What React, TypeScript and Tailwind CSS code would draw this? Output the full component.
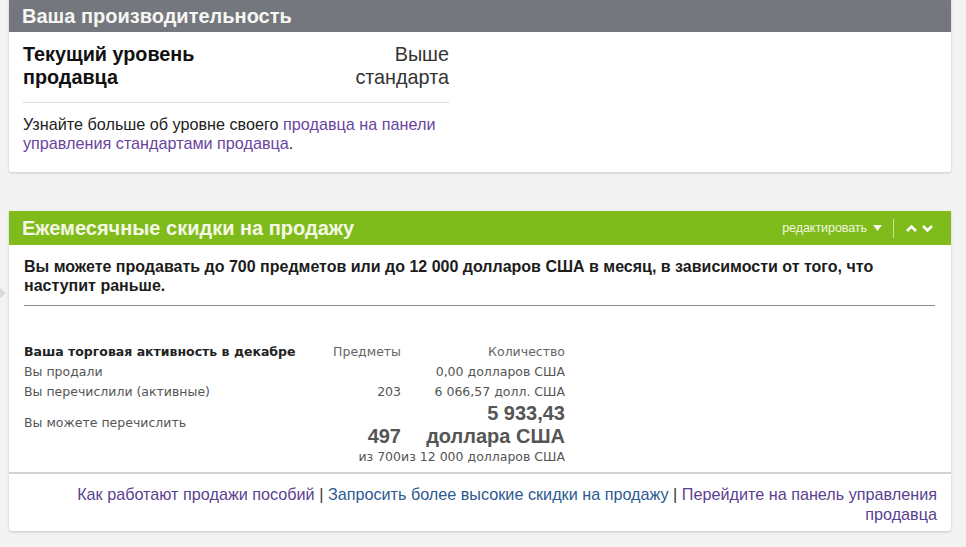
import React from 'react';

const arial = "font-['Liberation_Sans',Arial,sans-serif]";
const verdana = "font-['DejaVu_Sans',Verdana,sans-serif]";

function PerformanceCard() {
  return (
    <section className="ml-[9px] mr-[15px] rounded-b-[3px] bg-white shadow-[0_1px_3px_rgba(0,0,0,0.18)]">
      <header className="flex h-[32px] items-center bg-[#75777e] px-[13px]">
        <h2 className={`${arial} text-[20px] font-bold text-[#f6f6f2]`}>Ваша производительность</h2>
      </header>
      <div className="px-[14px] pb-[19px] pt-[11px]">
        <div className="w-[426px]">
          <div className="flex justify-between border-b border-[#dcdcdc] pb-[13px]">
            <div className={`${arial} text-[19.8px] font-bold leading-[23px] text-[#111]`}>
              Текущий уровень
              <br />
              продавца
            </div>
            <div className={`${arial} text-right text-[19.8px] leading-[23px] text-[#333]`}>
              Выше
              <br />
              стандарта
            </div>
          </div>
          <p className={`${arial} mt-[12px] text-[16.2px] leading-[19px] text-[#222]`}>
            Узнайте больше об уровне своего <a className="text-[#6a44a0]">продавца на панели</a>
            <br />
            <a className="text-[#6a44a0]">управления стандартами продавца</a>.
          </p>
        </div>
      </div>
    </section>
  );
}

function ActivityTable() {
  return (
    <div className={`${verdana} mt-[36px] grid w-[541px] grid-cols-[296px_81px_164px] text-[12.5px] text-[#555]`}>
      <div className="flex h-[20px] items-center font-bold text-[#222]">Ваша торговая активность в декабре</div>
      <div className="flex h-[20px] items-center justify-end text-[#666]">Предметы</div>
      <div className="flex h-[20px] items-center justify-end text-[#666]">Количество</div>

      <div className="flex h-[20px] items-center">Вы продали</div>
      <div />
      <div className="flex h-[20px] items-center justify-end">0,00 долларов США</div>

      <div className="flex h-[20px] items-center">Вы перечислили (активные)</div>
      <div className="flex h-[20px] items-center justify-end">203</div>
      <div className="flex h-[20px] items-center justify-end">6 066,57 долл. США</div>

      <div className="flex items-center pb-[4px]">Вы можете перечислить</div>
      <div className={`${arial} flex items-end justify-end text-[20px] font-bold leading-[23px] text-[#555]`}>497</div>
      <div className={`${arial} text-right text-[20px] font-bold leading-[23px] text-[#555]`}>
        5 933,43
        <br />
        доллара США
      </div>

      <div />
      <div className="flex h-[18px] items-center justify-end">из 700</div>
      <div className="flex h-[18px] items-center justify-end">из 12 000 долларов США</div>
    </div>
  );
}

function SellingLimitsCard() {
  return (
    <section className="ml-[9px] mr-[15px] mt-[39px] rounded-b-[3px] bg-white shadow-[0_1px_3px_rgba(0,0,0,0.18)]">
      <header className="flex h-[34px] items-center justify-between bg-[#80bb1c] pl-[13px] pr-[17px]">
        <h2 className={`${arial} text-[20px] font-bold text-[#f4f8e4]`}>Ежемесячные скидки на продажу</h2>
        <div className="flex items-center">
          <a className={`${arial} text-[12.6px] tracking-[-0.1px] text-[#eef6dc]`}>редактировать</a>
          <svg className="ml-[6px]" width="9" height="6" viewBox="0 0 9 6">
            <path d="M0 0h9L4.5 6z" fill="#f2f8e6" />
          </svg>
          <span className="mx-[11px] h-[19px] w-px bg-[#c9e39b]" />
          <svg width="13" height="9" viewBox="0 0 13 9">
            <path d="M2 7l4.5-4.5L11 7" fill="none" stroke="#fff" strokeWidth="2.6" />
          </svg>
          <svg className="ml-[3px]" width="13" height="9" viewBox="0 0 13 9">
            <path d="M2 2l4.5 4.5L11 2" fill="none" stroke="#fff" strokeWidth="2.6" />
          </svg>
        </div>
      </header>
      <div className="pb-[6px] pl-[15px] pr-[16px] pt-[12px]">
        <p className={`${arial} border-b border-[#8a8a8a] pb-[10px] text-[16px] font-bold leading-[19px] text-[#1c1c1c]`}>
          Вы можете продавать до 700 предметов или до 12 000 долларов США в месяц, в зависимости от того, что
          наступит раньше.
        </p>
        <ActivityTable />
      </div>
      <footer className="border-t-2 border-[#d2d2d2] pb-[7px] pl-[13px] pr-[14px] pt-[10px]">
        <p className={`${arial} text-right text-[16.2px] leading-[20px] text-[#333]`}>
          <a className="text-[#5b3f91]">Как работают продажи пособий</a> |{' '}
          <a className="text-[#2c5a92]">Запросить более высокие скидки на продажу</a> |{' '}
          <a className="text-[#5b3f91]">Перейдите на панель управления продавца</a>
        </p>
      </footer>
    </section>
  );
}

export default function App() {
  return (
    <div className="relative h-[547px] w-[966px] overflow-hidden bg-[#f3f3f3]">
      <PerformanceCard />
      <SellingLimitsCard />
      {/* carousel arrow peeking in from the left edge */}
      <div className="absolute left-[-8px] top-[281px] h-0 w-0 border-y-[12px] border-l-[14px] border-y-transparent border-l-[#d9d9d9]" />
    </div>
  );
}
